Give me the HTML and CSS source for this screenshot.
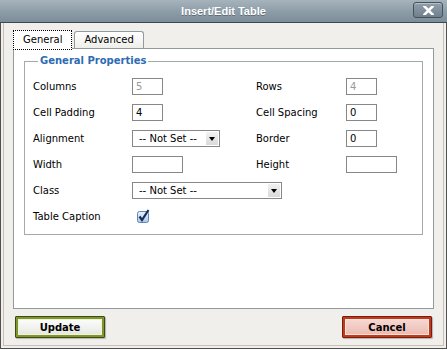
FILE: index.html
```html
<!DOCTYPE html>
<html lang="en">
<head>
    <meta charset="UTF-8">
    <title>Insert/Edit Table</title>
    <link rel="stylesheet" href="styles.css">
</head>
<body>

<div class="dialog">
    <div class="titlebar">
        <span></span>
        <span class="title">Insert/Edit Table</span>
        <span class="close">
            <svg width="11" height="9" viewBox="0 0 11 9"><path d="M1.5 0.5 L9.5 8.5 M9.5 0.5 L1.5 8.5" stroke="#fff" stroke-width="2.6" stroke-linecap="square"/></svg>
        </span>
    </div>

    <div class="frame">
        <div class="tabs">
            <span class="tab active">General</span>
            <span class="tab">Advanced</span>
        </div>

        <div class="panel">
            <fieldset class="props">
                <legend>General Properties</legend>
                <div class="grid">
                    <label>Columns</label>
                    <span><input class="field small" value="5" disabled></span>
                    <label>Rows</label>
                    <span><input class="field small" value="4" disabled></span>

                    <label>Cell Padding</label>
                    <span><input class="field small" value="4"></span>
                    <label>Cell Spacing</label>
                    <span><input class="field small" value="0"></span>

                    <label>Alignment</label>
                    <span><span class="select short">-- Not Set --<i class="arrow"></i></span></span>
                    <label>Border</label>
                    <span><input class="field small" value="0"></span>

                    <label>Width</label>
                    <span><input class="field wide" value=""></span>
                    <label>Height</label>
                    <span><input class="field wide" value=""></span>

                    <label>Class</label>
                    <span class="span3"><span class="select long">-- Not Set --<i class="arrow"></i></span></span>

                    <label>Table Caption</label>
                    <span class="span3">
                        <svg class="check" width="14" height="15" viewBox="0 0 14 15">
                            <defs>
                                <linearGradient id="cb" x1="0" y1="0" x2="0" y2="1">
                                    <stop offset="0" stop-color="#e9f3fd"/>
                                    <stop offset="1" stop-color="#a9c9ec"/>
                                </linearGradient>
                            </defs>
                            <rect x="0.5" y="2.5" width="11" height="11" rx="2" fill="url(#cb)" stroke="#5f86b5"/>
                            <path d="M2.5 7.5 L5 11 L11.5 1" fill="none" stroke="#1b2c57" stroke-width="2.2"/>
                        </svg>
                    </span>
                </div>
            </fieldset>
        </div>

        <div class="buttons">
            <button class="btn update">Update</button>
            <button class="btn cancel">Cancel</button>
        </div>
    </div>
</div>

</body>
</html>
```

FILE: styles.css
```css
* { margin: 0; padding: 0; box-sizing: border-box; }
html, body { width: 100%; height: 100%; }
body {
    background: #fff;
    font-family: "DejaVu Sans", Verdana, sans-serif;
    font-size: 10px;
    color: #000;
}
.dialog {
    width: 447px;
    height: 349px;
    display: flex;
    flex-direction: column;
    border: 1px solid #505050;
    border-top: none;
    background: #f0efec;
}
.titlebar {
    height: 23px;
    margin: 0 -1px;
    display: grid;
    grid-template-columns: 1fr auto 1fr;
    align-items: center;
    background: linear-gradient(#a6b3bc, #8e9ea9 50%, #7c8c98);
    border-bottom: 1px solid #3c4850;
}
.title {
    font-family: "Liberation Sans", Arial, sans-serif;
    font-weight: bold;
    font-size: 11px;
    color: #fff;
    text-shadow: 0 1px 0 rgba(40,52,60,0.45);
}
.close {
    justify-self: end;
    margin-right: 4px;
    margin-top: -2px;
    width: 30px;
    height: 16px;
    border: 1px solid #46525b;
    border-radius: 3px;
    background: linear-gradient(#909fab, #6f7f8b);
    box-shadow: inset 0 1px 0 rgba(255,255,255,0.35);
    display: flex;
    justify-content: center;
    align-items: center;
}
.frame {
    flex: 1;
    margin: 0 2px 2px;
    border: 1px solid #cbbfb3;
    border-top: none;
    padding: 7px 9px 0;
    display: flex;
    flex-direction: column;
}
.tabs {
    display: flex;
    align-items: flex-end;
    gap: 2px;
    height: 18px;
}
.tab {
    height: 17px;
    padding: 0 9px;
    line-height: 16px;
    border: 1px solid #919b9c;
    border-bottom: none;
    border-radius: 3px 3px 0 0;
    background: linear-gradient(#fff, #eeeee9);
}
.tab.active {
    position: relative;
    z-index: 1;
    height: 20px;
    margin-bottom: -2px;
    line-height: 18px;
    border: 1px dotted #000;
    border-radius: 0;
    background: #fff;
}
.panel {
    height: 261px;
    background: #fff;
    border: 1px solid #919b9c;
    padding: 6px 10px;
}
.props {
    border: 1px solid #a4a9ab;
    padding: 6px 8px 5px;
}
.props legend {
    margin-left: 5px;
    padding: 0 2px;
    line-height: 12px;
    font-weight: bold;
    color: #2d6bb3;
}
.grid {
    display: grid;
    grid-template-columns: 99px 124px 90px 1fr;
    grid-auto-rows: 26px;
    align-items: center;
}
.grid > span { display: flex; align-items: center; }
.span3 { grid-column: 2 / 5; }
.field {
    height: 17px;
    border: 1px solid #878787;
    padding: 0 3px;
    font: 10px "DejaVu Sans", Verdana, sans-serif;
    color: #000;
    background: #fff;
}
.field:disabled { color: #9a9a9a; }
.small { width: 31px; }
.wide { width: 51px; }
.select {
    position: relative;
    height: 17px;
    border: 1px solid #878787;
    padding-left: 6px;
    line-height: 15px;
    background: #fff;
}
.short { width: 88px; }
.long { width: 150px; }
.arrow {
    position: absolute;
    right: 1px;
    top: 1px;
    width: 12px;
    height: 13px;
    background: linear-gradient(#f2f2f2, #d9d9d9);
}
.arrow::after {
    content: "";
    position: absolute;
    left: 3px;
    top: 5px;
    border-left: 3px solid transparent;
    border-right: 3px solid transparent;
    border-top: 4px solid #000;
}
.check { margin-left: 5px; margin-top: 0; }
.buttons {
    display: flex;
    justify-content: space-between;
    padding: 7px 2px 0;
}
.btn {
    width: 90px;
    height: 22px;
    font: bold 10px "DejaVu Sans", Verdana, sans-serif;
    color: #000;
    border-radius: 1px;
}
.update {
    border: 1px solid #3e4a10;
    background: linear-gradient(#ffffff, #f1f1ee 55%, #e2e2dc);
    box-shadow: inset 0 0 0 2px #7f962a, inset 0 0 0 3px #eef1dc, 1px 1px 1px rgba(0,0,0,0.25);
}
.cancel {
    border: 1px solid #7a1c0c;
    background: linear-gradient(#f7dcd6, #f0c9c1 55%, #e6b4ab);
    box-shadow: inset 0 0 0 2px #c23a1c, inset 0 0 0 3px #f7e2dd, 1px 1px 1px rgba(0,0,0,0.25);
}
```
